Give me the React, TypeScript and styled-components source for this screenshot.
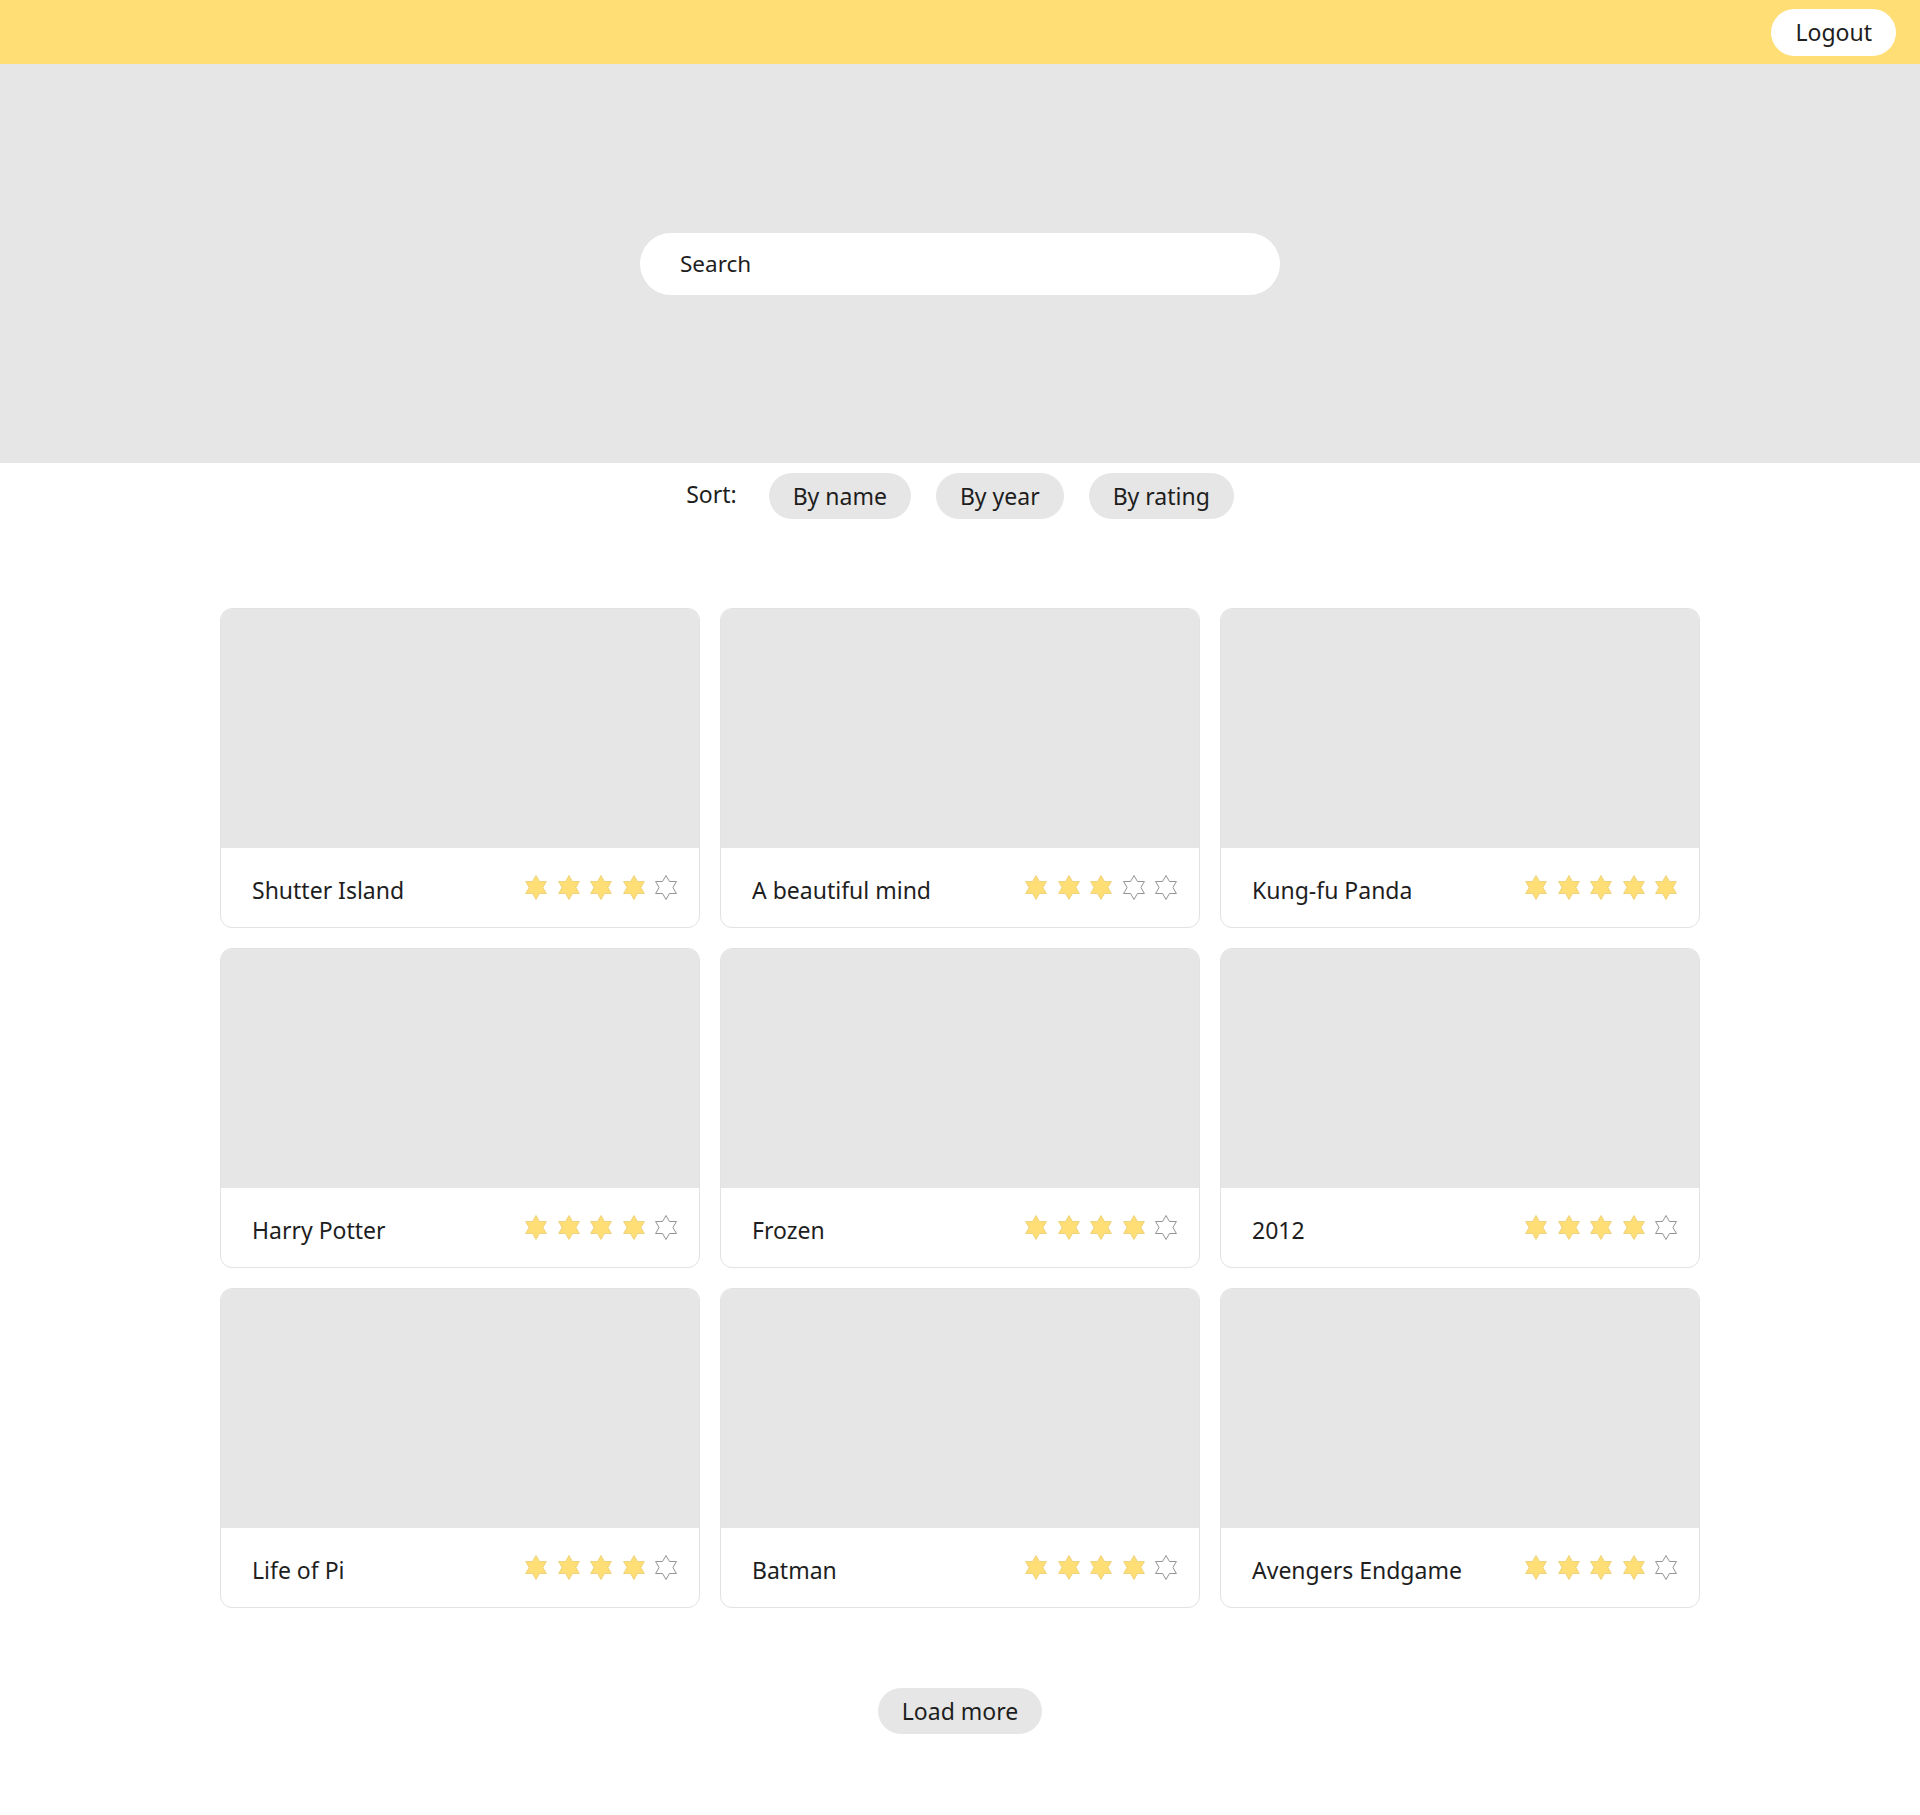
import styled, { createGlobalStyle } from "styled-components";

const GlobalStyle = createGlobalStyle`
	body {
		margin: 0;
		font-family: "Noto Sans", "Open Sans", sans-serif;
		color: #1e1e1e;
		background: #fff;
	}
	* {
		box-sizing: border-box;
	}
`;

interface Movie {
	title: string;
	rating: number;
}

const movies: Movie[] = [
	{ title: "Shutter Island", rating: 4 },
	{ title: "A beautiful mind", rating: 3 },
	{ title: "Kung-fu Panda", rating: 5 },
	{ title: "Harry Potter", rating: 4 },
	{ title: "Frozen", rating: 4 },
	{ title: "2012", rating: 4 },
	{ title: "Life of Pi", rating: 4 },
	{ title: "Batman", rating: 4 },
	{ title: "Avengers Endgame", rating: 4 },
];

const STAR_POINTS =
	"12,0 15.75,6.5 23.26,6.5 19.5,13 23.26,19.5 15.75,19.5 12,26 8.25,19.5 0.74,19.5 4.5,13 0.74,6.5 8.25,6.5";

function Star({ filled }: { filled: boolean }) {
	return (
		<StarIcon viewBox="-1 -1 26 28" width="24" height="27">
			<polygon
				points={STAR_POINTS}
				fill={filled ? "#ffde75" : "#fff"}
				stroke={filled ? "#ecd07a" : "#8a8a8a"}
				strokeWidth="1"
				strokeLinejoin="round"
			/>
		</StarIcon>
	);
}

function MovieCard({ movie }: { movie: Movie }) {
	return (
		<Card>
			<Poster />
			<CardFooter>
				<Title>{movie.title}</Title>
				<Stars>
					{[1, 2, 3, 4, 5].map((n) => (
						<Star key={n} filled={n <= movie.rating} />
					))}
				</Stars>
			</CardFooter>
		</Card>
	);
}

export default function App() {
	return (
		<>
			<GlobalStyle />
			<Header>
				<LogoutButton>Logout</LogoutButton>
			</Header>
			<Hero>
				<SearchInput type="text" placeholder="Search" />
			</Hero>
			<SortRow>
				<SortLabel>Sort:</SortLabel>
				<Pill>By name</Pill>
				<Pill>By year</Pill>
				<Pill>By rating</Pill>
			</SortRow>
			<Grid>
				{movies.map((m) => (
					<MovieCard key={m.title} movie={m} />
				))}
			</Grid>
			<Bottom>
				<Pill>Load more</Pill>
			</Bottom>
		</>
	);
}

const Header = styled.header`
	height: 64px;
	background-color: #ffde75;
	display: flex;
	align-items: center;
	justify-content: flex-end;
	padding-right: 24px;
`;

const LogoutButton = styled.button`
	height: 47px;
	padding: 0 24px;
	border: none;
	border-radius: 24px;
	background: #fff;
	font-family: inherit;
	font-size: 23px;
	color: #1e1e1e;
	cursor: pointer;
`;

const Hero = styled.section`
	height: 399px;
	background-color: #e6e6e6;
	display: flex;
	align-items: center;
	justify-content: center;
`;

const SearchInput = styled.input`
	width: 640px;
	height: 62px;
	border: none;
	border-radius: 31px;
	padding: 0 40px;
	font-family: inherit;
	font-size: 22.5px;
	color: #1e1e1e;
	background: #fff;
	outline: none;

	&::placeholder {
		color: #1e1e1e;
	}
`;

const SortRow = styled.div`
	margin-top: 10px;
	display: flex;
	align-items: center;
	justify-content: center;
	gap: 25px;
`;

const SortLabel = styled.span`
	font-size: 23px;
	margin-right: 7px;
	padding-bottom: 4px;
`;

const Pill = styled.button`
	height: 46px;
	padding: 0 24px;
	border: none;
	border-radius: 23px;
	background-color: #e6e6e6;
	font-family: inherit;
	font-size: 23px;
	color: #1e1e1e;
	cursor: pointer;
`;

const Grid = styled.main`
	width: 1480px;
	margin: 89px auto 0;
	display: grid;
	grid-template-columns: repeat(3, 480px);
	gap: 20px;
`;

const Card = styled.article`
	height: 320px;
	border: 1px solid #e2e2e2;
	border-radius: 12px;
	overflow: hidden;
	display: flex;
	flex-direction: column;
	background: #fff;
`;

const Poster = styled.div`
	height: 239px;
	background-color: #e6e6e6;
`;

const CardFooter = styled.div`
	flex: 1;
	display: flex;
	align-items: center;
	justify-content: space-between;
	padding: 0 21px 0 31px;
`;

const Title = styled.span`
	font-size: 23px;
	padding-top: 4px;
`;

const Stars = styled.div`
	display: flex;
	gap: 8.5px;
`;

const StarIcon = styled.svg`
	display: block;
`;

const Bottom = styled.div`
	display: flex;
	justify-content: center;
	padding: 80px 0 80px;
`;
